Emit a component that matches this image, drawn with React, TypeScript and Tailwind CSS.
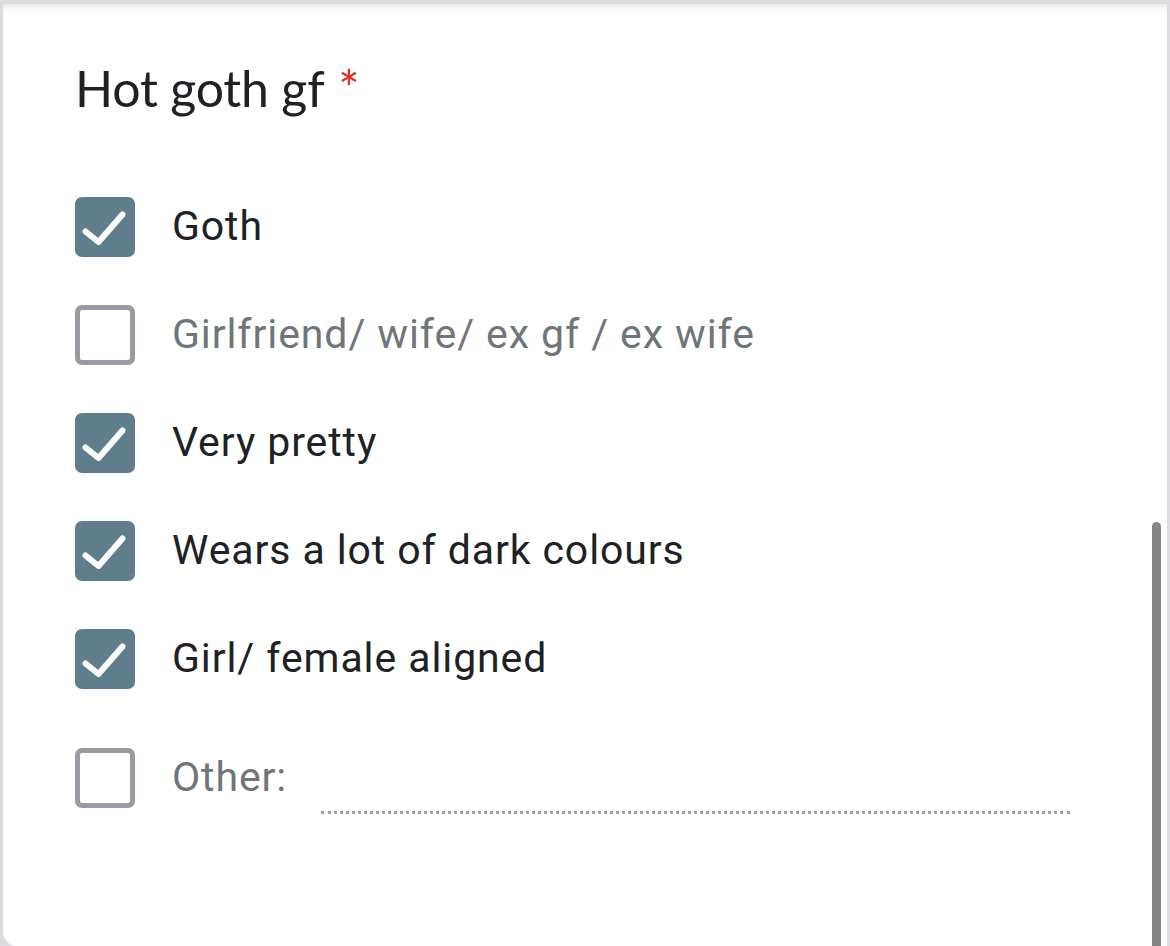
import React from 'react';

const items = [
  { label: 'Goth', checked: true },
  { label: 'Girlfriend/ wife/ ex gf / ex wife', checked: false },
  { label: 'Very pretty', checked: true },
  { label: 'Wears a lot of dark colours', checked: true },
  { label: 'Girl/ female aligned', checked: true },
];

const Box: React.FC<{ checked: boolean }> = ({ checked }) =>
  checked ? (
    <div className="w-[60px] h-[60px] shrink-0 rounded-[7px] bg-[#607d8b] flex items-center justify-center">
      <svg width="60" height="60" viewBox="0 0 60 60" fill="none">
        <path d="M10.5 34.5 L23.5 45 L47.5 17.5" stroke="white" strokeWidth="6" strokeLinecap="round" strokeLinejoin="round" />
      </svg>
    </div>
  ) : (
    <div className="w-[60px] h-[60px] shrink-0 rounded-[7px] border-[5px] border-[#9a9aa0] bg-white" />
  );

export default function App() {
  return (
    <div className="w-[1170px] h-[946px] bg-[#dcdce0] pt-[4px] px-[3px] overflow-hidden" style={{ fontFamily: 'Roboto, "Liberation Sans", sans-serif' }}>
      <div className="relative h-full bg-white rounded-bl-[14px] shadow-[inset_0_8px_10px_-6px_rgba(0,0,0,0.12)]">
        {/* scrollbar */}
        <div className="absolute right-[6px] top-[518px] bottom-0 w-[9px] rounded-t-full bg-[#858585]" />

        <div className="pl-[72px] pt-[54px]">
          <h1 className="text-[50px] leading-[60px] text-[#202124] tracking-[-0.2px]" style={{ fontFamily: 'Lato, Roboto, sans-serif' }}>
            Hot goth gf <span className="ml-[2px] text-[#d93025]">*</span>
          </h1>

          <div className="mt-[55px] flex flex-col">
            {items.map((it) => (
              <div key={it.label} className="h-[108px] flex items-center gap-[37px]">
                <Box checked={it.checked} />
                <span className={`text-[41px] tracking-[0.9px] ${it.checked ? 'text-[#202124]' : 'text-[#70757a]'}`}>
                  {it.label}
                </span>
              </div>
            ))}
            <div className="mt-[11px] h-[108px] flex items-center">
              <Box checked={false} />
              <span className="ml-[37px] text-[41px] tracking-[0.9px] text-[#70757a]">Other:</span>
              <div className="ml-[34px] mt-[68px] w-[749px] border-b-[3px] border-dotted border-[#a0a0a4]" />
            </div>
          </div>
        </div>
      </div>
    </div>
  );
}
